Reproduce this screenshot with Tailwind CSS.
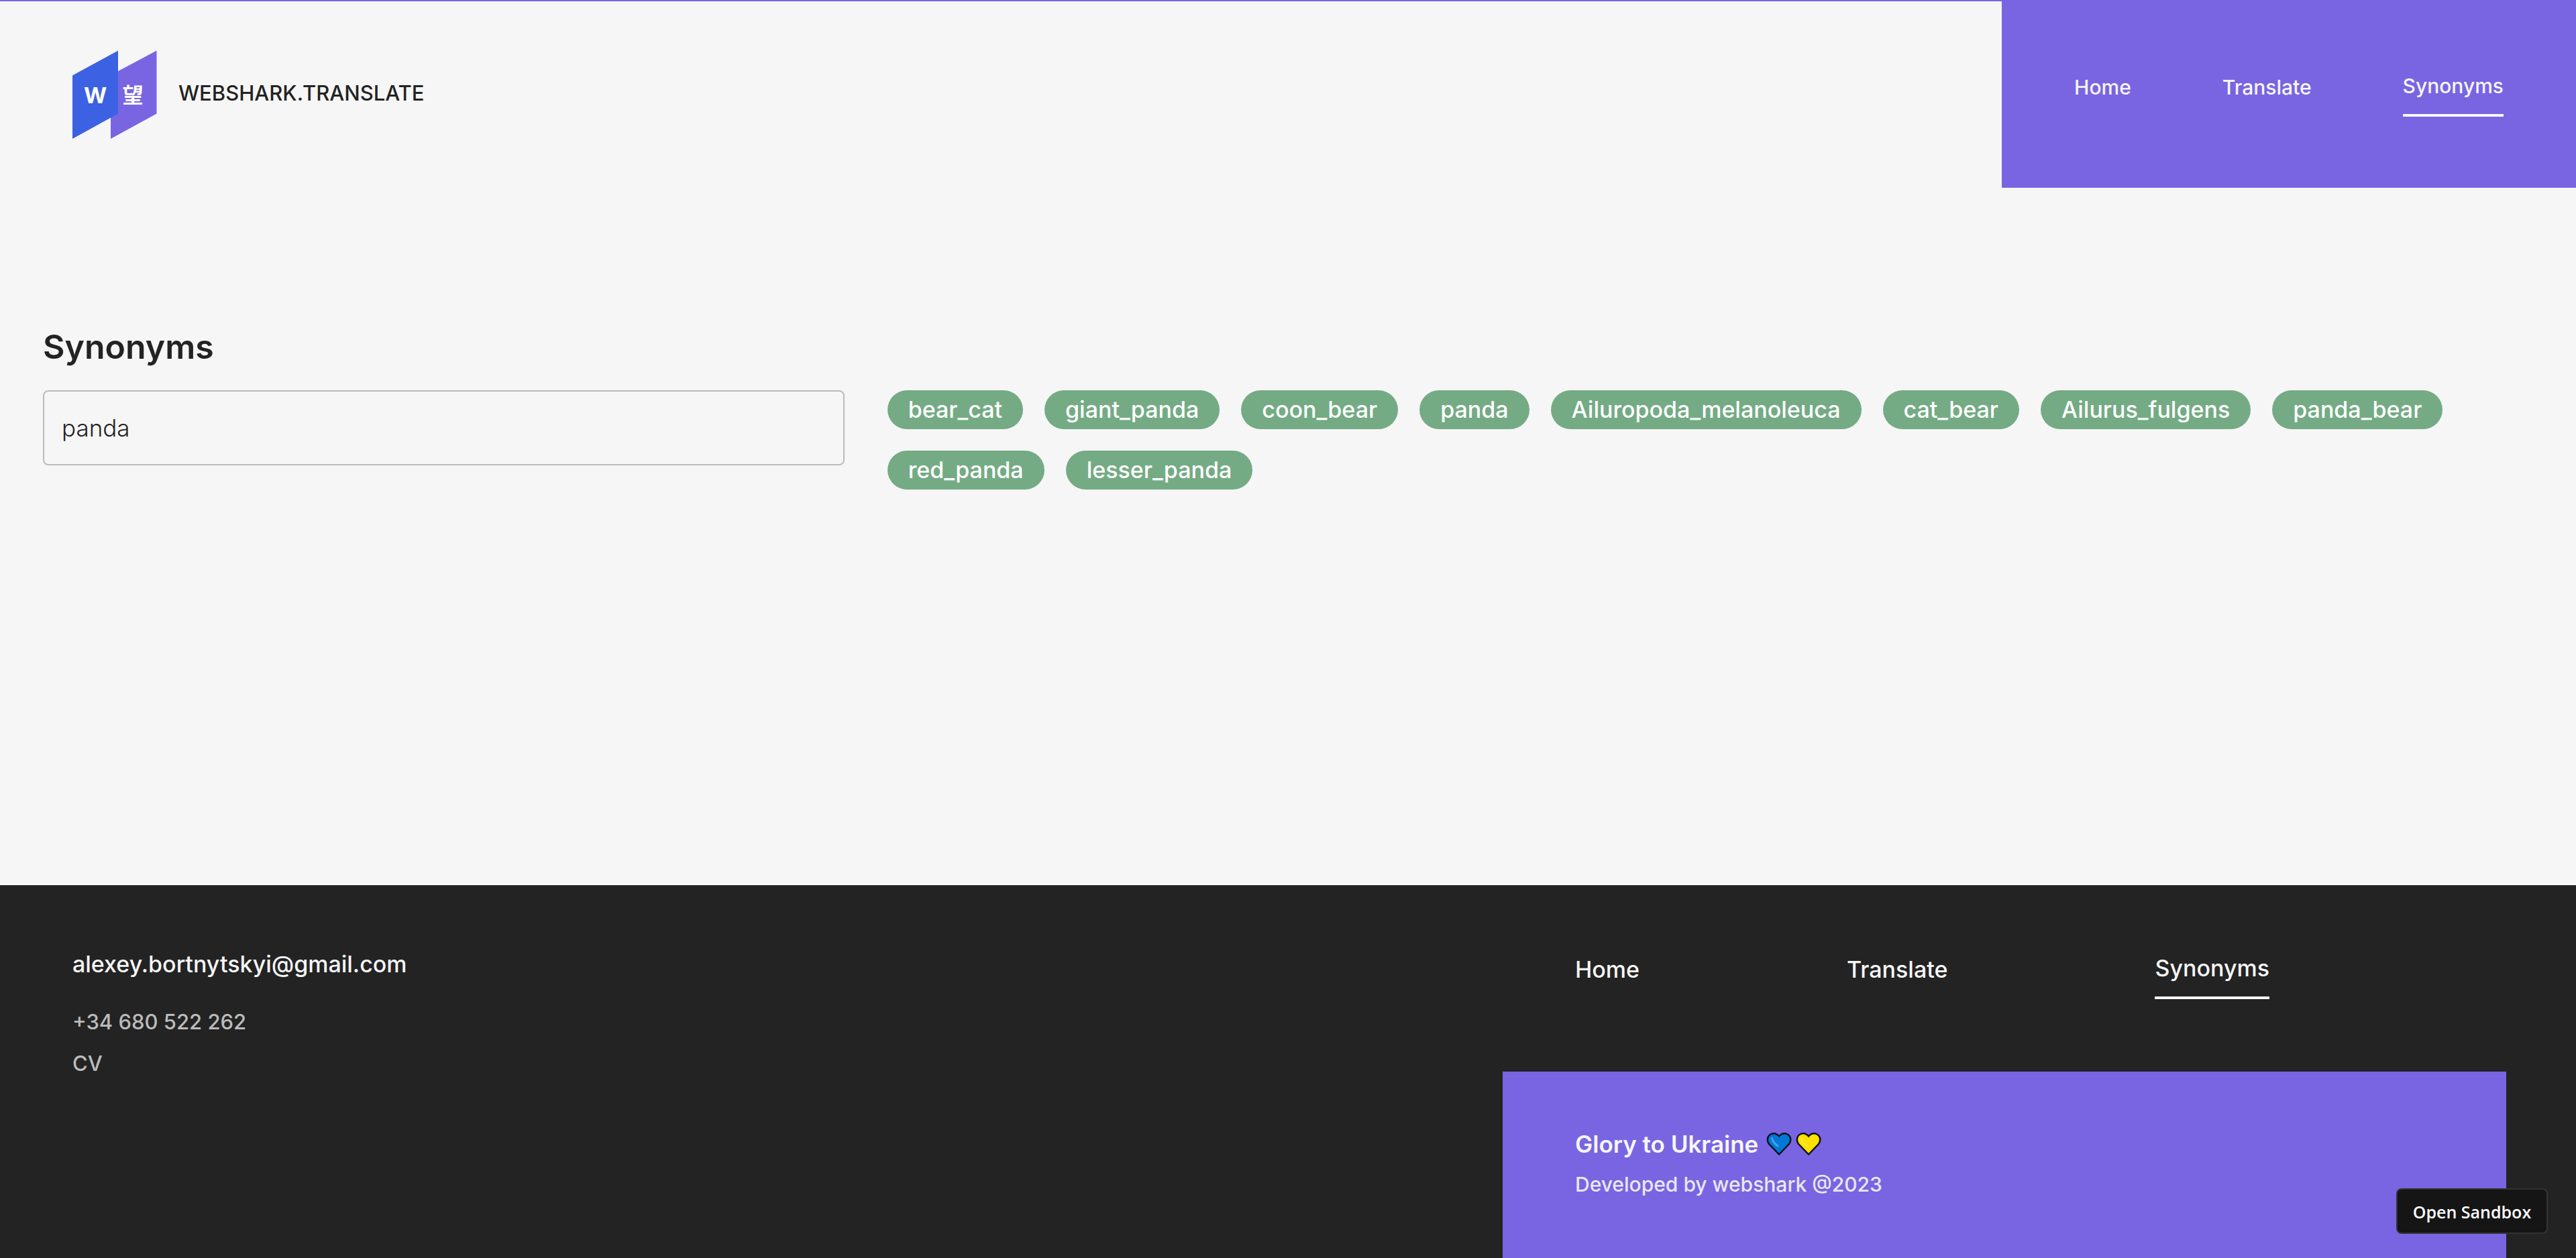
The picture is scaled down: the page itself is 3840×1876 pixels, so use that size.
<!DOCTYPE html>
<html lang="en">
<head>
<meta charset="utf-8">
<meta name="viewport" content="width=device-width, initial-scale=1">
<title>Webshark.Translate</title>
<script src="https://cdn.jsdelivr.net/npm/@tailwindcss/browser@4"></script>
</head>
<body class="flex min-h-screen flex-col bg-[#f6f6f6] font-['Inter',sans-serif] font-medium text-[#232323]">

<header class="flex items-stretch justify-between border-t-2 border-[#7965e2]">
  <a href="#" class="flex items-center gap-8 pl-[108px] text-[31px] leading-10">
    <svg class="h-[132px] w-[126px]" viewBox="0 0 126 132" aria-hidden="true">
      <path d="M57 37L125.500 0.500V94.500L57 132Z" fill="#7965e2"/>
      <path d="M0 37.500L68 0.500V94.500L0 132Z" fill="#3c61e2"/>
      <text x="34" y="79" text-anchor="middle" font-family="Inter, sans-serif" font-weight="700" font-size="33" fill="#fff">W</text>
      <text x="90" y="78" text-anchor="middle" font-family="'Noto Sans CJK JP', sans-serif" font-weight="700" font-size="31" fill="#fff">望</text>
    </svg>
    <span class="pb-1">WEBSHARK.TRANSLATE</span>
  </a>
  <nav class="flex h-[278px] items-center gap-[136px] bg-[#7965e2] px-[108px] text-[30px] leading-10 text-[#f6f6f6]">
    <a href="#" class="pb-[22px]">Home</a>
    <a href="#" class="pb-[22px]">Translate</a>
    <a href="#" class="border-b-4 border-[#f6f6f6] pb-[22px]" aria-current="page">Synonyms</a>
  </nav>
</header>

<main class="grow px-16 pt-[207px]">
  <h1 class="mb-[35px] text-[50px] leading-[60px] font-semibold"><label for="word">Synonyms</label></h1>
  <div class="grid grid-cols-12 items-start gap-16">
    <input id="word" type="text" value="panda" class="col-span-4 h-28 rounded-lg border-2 border-[#bbbbbb] bg-transparent px-[26px] text-[35px] font-light">
    <ul class="col-span-8 flex flex-wrap gap-8 text-[34px] leading-[58px] text-white">
      <li class="rounded-full bg-[#74ab84] px-[31px]">bear_cat</li>
      <li class="rounded-full bg-[#74ab84] px-[31px]">giant_panda</li>
      <li class="rounded-full bg-[#74ab84] px-[31px]">coon_bear</li>
      <li class="rounded-full bg-[#74ab84] px-[31px]">panda</li>
      <li class="rounded-full bg-[#74ab84] px-[31px]">Ailuropoda_melanoleuca</li>
      <li class="rounded-full bg-[#74ab84] px-[31px]">cat_bear</li>
      <li class="rounded-full bg-[#74ab84] px-[31px]">Ailurus_fulgens</li>
      <li class="rounded-full bg-[#74ab84] px-[31px]">panda_bear</li>
      <li class="rounded-full bg-[#74ab84] px-[31px]">red_panda</li>
      <li class="rounded-full bg-[#74ab84] px-[31px]">lesser_panda</li>
    </ul>
  </div>
</main>

<footer class="grid grid-cols-12 bg-[#232323] text-[34px] leading-10 text-[#f6f6f6]">
  <address class="col-span-7 flex flex-col items-start pt-[98px] pl-[108px] not-italic">
    <a href="mailto:alexey.bortnytskyi@gmail.com" class="mb-[46px]">alexey.bortnytskyi@gmail.com</a>
    <a href="tel:+34680522262" class="mb-[22px] text-[31px] text-[#bbbbbb]">+34 680 522 262</a>
    <a href="#" class="text-[31px] text-[#bbbbbb]">CV</a>
  </address>
  <div class="col-span-5 pr-[104px]">
    <nav class="flex items-center gap-[309px] px-[108px] pt-[104px] pb-[108px]">
      <a href="#" class="pb-[22px]">Home</a>
      <a href="#" class="pb-[22px]">Translate</a>
      <a href="#" class="border-b-4 border-[#f6f6f6] pb-[22px]" aria-current="page">Synonyms</a>
    </nav>
    <div class="bg-[#7965e2] px-[108px] pt-[88px] pb-[90px]">
      <p class="mb-5 flex items-center text-[35px] font-semibold">Glory to Ukraine
        <svg class="ml-3 h-9 w-[82px]" viewBox="0 0 82 36" role="img" aria-label="Blue heart, yellow heart">
          <defs><path id="heart" d="M19 33.500L4.500 18.500C0 13.500 1.500 6 6.500 3.500C11 1.200 15.500 2.500 19 6.500C22.500 2.500 27 1.200 31.500 3.500C36.500 6 38 13.500 33.500 18.500Z"/></defs>
          <use href="#heart" fill="#0078d7" stroke="#101018" stroke-width="2.500"/>
          <path d="M8.500 9.500C9 14 11.500 17 17 21" fill="none" stroke="#4a9fe3" stroke-width="3" stroke-linecap="round"/>
          <use href="#heart" x="44" fill="#ffe000" stroke="#101018" stroke-width="2.500"/>
          <path d="M52.500 9.500C53 14 55.500 17 61 21" fill="none" stroke="#ffe93a" stroke-width="3" stroke-linecap="round"/>
        </svg>
      </p>
      <p class="text-[30px] text-[#e9e7f3]">Developed by webshark @2023</p>
    </div>
  </div>
</footer>

<button type="button" class="fixed right-[42px] bottom-9 h-[68px] w-[226px] rounded-lg border-2 border-[#343434] bg-[#151515] pt-1 font-['Open_Sans',sans-serif] text-[25px] font-semibold text-white">Open Sandbox</button>

</body>
</html>
